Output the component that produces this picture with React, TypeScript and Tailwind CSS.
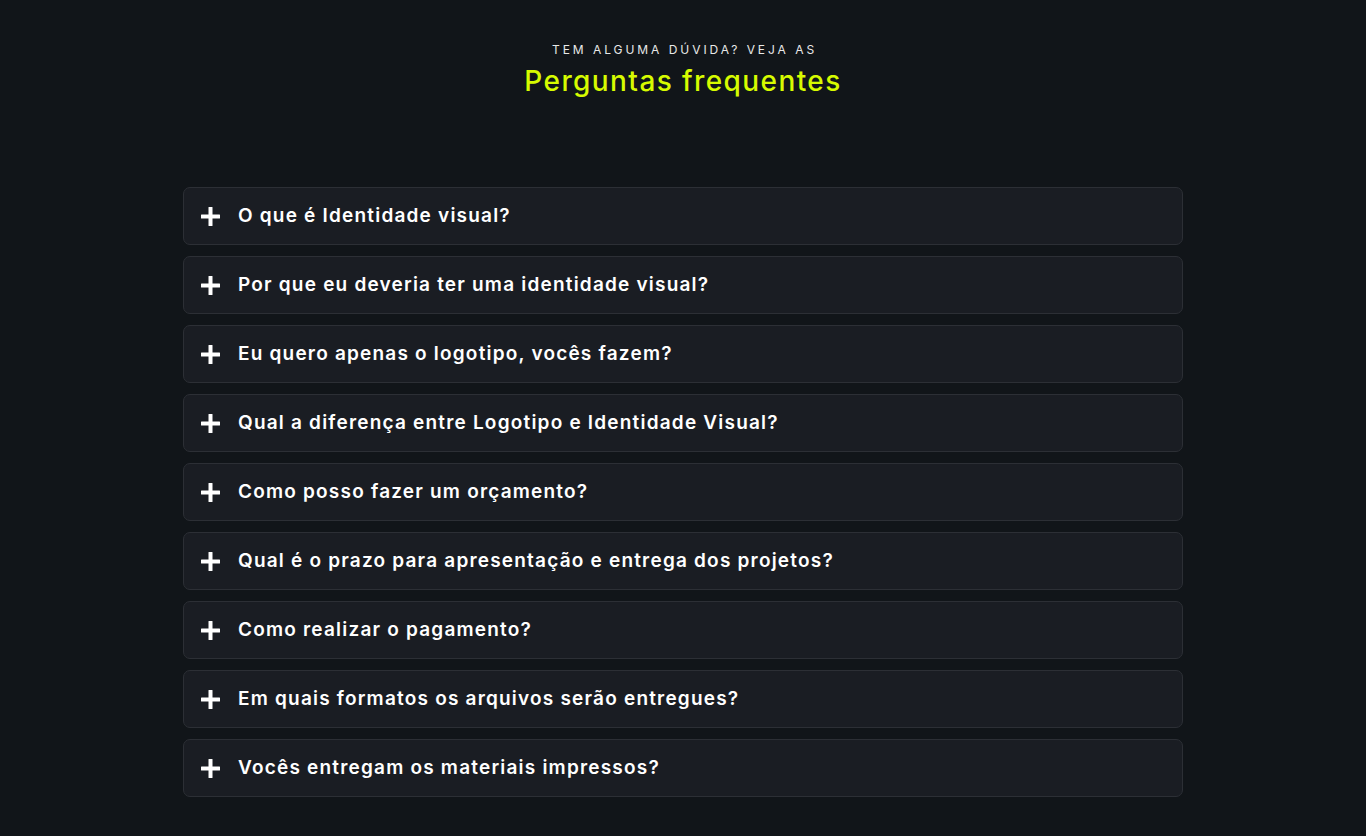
const perguntas = [
  "O que é Identidade visual?",
  "Por que eu deveria ter uma identidade visual?",
  "Eu quero apenas o logotipo, vocês fazem?",
  "Qual a diferença entre Logotipo e Identidade Visual?",
  "Como posso fazer um orçamento?",
  "Qual é o prazo para apresentação e entrega dos projetos?",
  "Como realizar o pagamento?",
  "Em quais formatos os arquivos serão entregues?",
  "Vocês entregam os materiais impressos?",
];

const PlusIcon = () => (
  <svg width="19" height="19" viewBox="0 0 19 19" className="shrink-0">
    <rect x="7.5" y="0" width="4" height="19" rx="0.5" fill="#fff" />
    <rect x="0" y="7.5" width="19" height="4" rx="0.5" fill="#fff" />
  </svg>
);

export default function App() {
  return (
    <div
      className="min-h-[836px] bg-[#111519] text-white pt-[43px] pb-[39px]"
      style={{ fontFamily: "Inter, 'Noto Sans', sans-serif" }}
    >
      <div className="flex flex-col items-center">
        <p className="text-[12px] leading-[14px] tracking-[2.95px] text-[#e8e8e8] uppercase pl-[3px]">
          Tem alguma dúvida? Veja as
        </p>
        <h2 className="mt-[6px] text-[28px] leading-[36px] font-medium tracking-[1.4px] text-[#d7fb00]">
          Perguntas frequentes
        </h2>
      </div>

      <ul className="mt-[88px] mx-auto w-[1000px] flex flex-col gap-[11px]">
        {perguntas.map((p) => (
          <li
            key={p}
            className="h-[58px] flex items-center gap-[18px] pl-[17px] pr-[17px] rounded-[7px] border border-[#2c2f35] bg-[#1a1d23]"
          >
            <PlusIcon />
            <span className="text-[19px] font-semibold tracking-[1.2px]">{p}</span>
          </li>
        ))}
      </ul>
    </div>
  );
}
